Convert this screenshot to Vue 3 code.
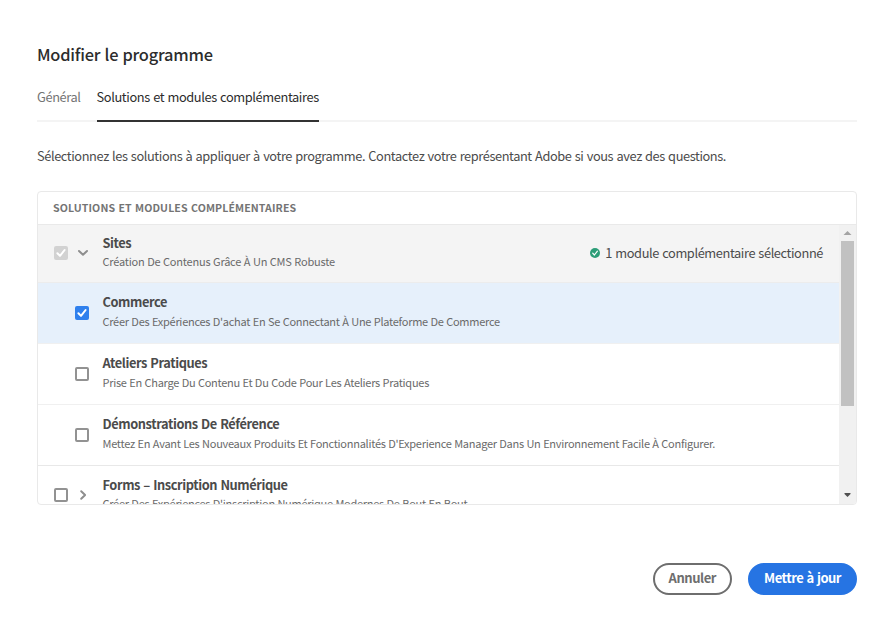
<script setup>
import { ref } from 'vue'

const tabs = ['Général', 'Solutions et modules complémentaires']
const activeTab = ref(1)

const rows = ref([
  { id: 'sites', title: 'Sites', desc: 'Création De Contenus Grâce À Un CMS Robuste', parent: true, open: true, state: 'locked', status: '1 module complémentaire sélectionné' },
  { id: 'commerce', title: 'Commerce', desc: "Créer Des Expériences D'achat En Se Connectant À Une Plateforme De Commerce", state: 'checked' },
  { id: 'ateliers', title: 'Ateliers Pratiques', desc: 'Prise En Charge Du Contenu Et Du Code Pour Les Ateliers Pratiques', state: 'empty' },
  { id: 'demos', title: 'Démonstrations De Référence', desc: "Mettez En Avant Les Nouveaux Produits Et Fonctionnalités D'Experience Manager Dans Un Environnement Facile À Configurer.", state: 'empty', last: true },
  { id: 'forms', title: 'Forms – Inscription Numérique', desc: "Créer Des Expériences D'inscription Numérique Modernes De Bout En Bout", parent: true, open: false, state: 'empty' },
])

function toggle(row) {
  if (row.state !== 'locked') row.state = row.state === 'checked' ? 'empty' : 'checked'
}
</script>

<template>
  <main class="dialog">
    <h1 class="title">Modifier le programme</h1>

    <nav class="tabs">
      <a v-for="(tab, i) in tabs" :key="tab" class="tab" :class="{ active: i === activeTab }" @click="activeTab = i">{{ tab }}</a>
    </nav>

    <p class="intro">Sélectionnez les solutions à appliquer à votre programme. Contactez votre représentant Adobe si vous avez des questions.</p>

    <section class="card">
      <header class="card-head">SOLUTIONS ET MODULES COMPLÉMENTAIRES</header>
      <div class="viewport">
        <div class="list">
          <div
            v-for="row in rows"
            :key="row.id"
            class="row"
            :class="[row.parent ? 'parent' : 'child', row.state, { open: row.open, last: row.last }]"
          >
            <span class="box" @click="toggle(row)">
              <svg v-if="row.state !== 'empty'" viewBox="0 0 14 14" width="14" height="14">
                <path d="M3.4 7.2 L6 9.9 L10.6 4" fill="none" stroke="#fff" stroke-width="2" stroke-linecap="round" stroke-linejoin="round" />
              </svg>
            </span>
            <span v-if="row.parent" class="chevron">
              <svg viewBox="0 0 12 12" width="12" height="12">
                <path :d="row.open ? 'M2 4 L6 7.8 L10 4' : 'M4.2 2.2 L8.1 6 L4.2 9.8'" fill="none" stroke="#8e8e8e" stroke-width="2" stroke-linecap="round" stroke-linejoin="round" />
              </svg>
            </span>
            <div class="text">
              <div class="name">{{ row.title }}</div>
              <div class="desc">{{ row.desc }}</div>
            </div>
            <div v-if="row.status" class="status">
              <svg viewBox="0 0 10 10" width="10" height="10">
                <circle cx="5" cy="5" r="5" fill="#2d9d78" />
                <path d="M2.7 5.2 L4.4 7 L7.4 3.2" fill="none" stroke="#fff" stroke-width="1.2" stroke-linecap="round" stroke-linejoin="round" />
              </svg>
              <span>{{ row.status }}</span>
            </div>
          </div>
        </div>
        <div class="scrollbar">
          <svg class="arrow" viewBox="0 0 17 16" width="17" height="16"><path d="M8.5 6 L12.5 10 H4.5 Z" fill="#a3a3a3" /></svg>
          <div class="thumb"></div>
          <svg class="arrow down" viewBox="0 0 17 16" width="17" height="16"><path d="M5.5 5 H11.5 V6 L8.5 9 L5.5 6 Z" fill="#505050" /></svg>
        </div>
      </div>
    </section>

    <footer class="actions">
      <button class="btn secondary">Annuler</button>
      <button class="btn primary">Mettre à jour</button>
    </footer>
  </main>
</template>

<style>
body {
  background: #fff;
}
</style>

<style scoped>
.dialog {
  box-sizing: border-box;
  width: 894px;
  height: 634px;
  padding: 42px 37px 0;
  overflow: hidden;
  background: #fff;
  color: #4b4b4b;
  font: 400 12.8px/20px "Noto Sans CJK SC", "Noto Sans", sans-serif;
  word-spacing: 0.8px;
}
.title {
  margin: 0;
  font-size: 16.4px;
  line-height: 24px;
  font-weight: 500;
  letter-spacing: -0.23px;
  color: #2c2c2c;
}
.tabs {
  display: flex;
  gap: 16px;
  height: 33px;
  margin-top: 21px;
  border-bottom: 2px solid #f4f4f4;
  letter-spacing: -0.38px;
}
.tab {
  height: 33px;
  white-space: nowrap;
  color: #747474;
  cursor: pointer;
}
.tab.active {
  color: #2c2c2c;
  border-bottom: 2px solid #323232;
}
.intro {
  margin: 24px 0 0;
  letter-spacing: -0.407px;
  white-space: nowrap;
}
.card {
  box-sizing: border-box;
  height: 314px;
  margin-top: 25px;
  border: 1px solid #e9e9e9;
  border-radius: 4px;
  overflow: hidden;
}
.card-head {
  box-sizing: border-box;
  height: 33px;
  padding: 8px 0 0 15px;
  border-bottom: 1px solid #e9e9e9;
  font-size: 10.6px;
  line-height: 16px;
  font-weight: 700;
  letter-spacing: 0.1px;
  color: #747474;
}
.viewport {
  display: flex;
  height: 279px;
}
.list {
  flex: 1;
  min-width: 0;
  overflow: hidden;
}
.row {
  box-sizing: border-box;
  display: flex;
  align-items: flex-start;
  height: 61px;
  padding: 9px 16px 0 37px;
  border-bottom: 1px solid #f0f0f0;
}
.row.last {
  border-bottom-color: #e8e8e8;
}
.row.parent {
  padding-left: 16px;
}
.row.open {
  height: 58px;
  padding-top: 8px;
  background: #f4f4f4;
  border-bottom-color: #ececec;
}
.row.child.checked {
  background: #e6f0fb;
}
.box {
  box-sizing: border-box;
  flex: none;
  width: 14px;
  height: 14px;
  margin-top: 14px;
  border: 2px solid #929292;
  border-radius: 2px;
}
.row.parent .box {
  margin-top: 13px;
}
.box svg {
  display: block;
}
.checked .box {
  border: 0;
  background: #2f80ed;
}
.locked .box {
  border: 0;
  background: #d2d2d2;
}
.chevron {
  flex: none;
  width: 12px;
  height: 12px;
  margin: 14px 0 0 9px;
}
.chevron svg {
  display: block;
}
.text {
  flex: 1;
  min-width: 0;
  margin-left: 13.5px;
  white-space: nowrap;
}
.name {
  font-weight: 700;
  letter-spacing: -0.4px;
}
.desc {
  margin-top: 1px;
  font-size: 11px;
  line-height: 16px;
  letter-spacing: -0.27px;
  word-spacing: 0.4px;
  color: #6a6a6a;
}
.parent .desc {
  margin-top: 0;
}
.open .desc {
  letter-spacing: -0.21px;
}
.status {
  display: flex;
  align-items: center;
  gap: 5px;
  margin-top: 10px;
  white-space: nowrap;
  letter-spacing: -0.395px;
}
.status svg {
  margin-bottom: 1px;
}
.scrollbar {
  display: flex;
  flex-direction: column;
  width: 17px;
  background: #f1f1f1;
}
.arrow {
  display: block;
}
.arrow.down {
  margin-top: auto;
}
.thumb {
  width: 13px;
  height: 165px;
  margin: 0 auto;
  background: #c1c1c1;
}
.actions {
  display: flex;
  justify-content: flex-end;
  gap: 16px;
  margin-top: 58px;
}
.btn {
  box-sizing: border-box;
  height: 32px;
  padding: 0 14px 3px;
  border: 2px solid #6e6e6e;
  border-radius: 16px;
  background: #fff;
  color: #6e6e6e;
  font: 700 13px/20px "Noto Sans CJK SC", "Noto Sans", sans-serif;
  letter-spacing: -0.45px;
  white-space: nowrap;
}
.btn.primary {
  border-color: #2674e3;
  background: #2674e3;
  color: #fff;
  letter-spacing: -0.5px;
  word-spacing: 0.8px;
}
</style>
